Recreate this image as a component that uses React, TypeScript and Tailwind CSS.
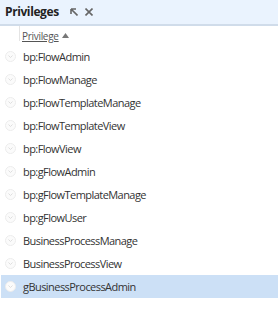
import React from "react";

const privileges = [
  "bp:FlowAdmin",
  "bp:FlowManage",
  "bp:FlowTemplateManage",
  "bp:FlowTemplateView",
  "bp:FlowView",
  "bp:gFlowAdmin",
  "bp:gFlowTemplateManage",
  "bp:gFlowUser",
  "BusinessProcessManage",
  "BusinessProcessView",
  "gBusinessProcessAdmin",
];

const ExpandIcon = () => (
  <svg width="11" height="11" viewBox="0 0 11 11" className="shrink-0">
    <circle cx="5.5" cy="5.5" r="5" fill="#fbfbfb" stroke="#ececec" />
    <path d="M3.5 4.5 5.5 6.5 7.5 4.5" fill="none" stroke="#dedede" strokeWidth="1" />
  </svg>
);

const Row = ({ name, selected }: { name: string; selected?: boolean }) => (
  <div
    className={`h-[23px] ml-[1px] flex items-center gap-[7px] pl-[4px] ${
      selected ? "bg-[#cce0f6]" : "bg-white"
    }`}
  >
    <ExpandIcon />
    <span className="text-[11px] tracking-[-0.55px] text-[#333] leading-none">{name}</span>
  </div>
);

const App: React.FC = () => {
  return (
    <div
      className="w-[278px] h-[311px] bg-white overflow-hidden"
      style={{ fontFamily: '"Open Sans", "Noto Sans", sans-serif' }}
    >
      <div className="h-[26px] bg-[#eaf3fe] border-b-2 border-[#d0dcea] flex items-center pl-[5px]">
        <span className="text-[12px] tracking-[-0.4px] font-bold text-[#222] leading-none">
          Privileges
        </span>
        <div className="flex items-center gap-[7px] ml-[11px] text-[#666]">
          <svg width="8" height="8" viewBox="0 0 8 8">
            <path d="M1 1h5M1 1v5M1 1l6.5 6.5" fill="none" stroke="currentColor" strokeWidth="1.6" />
          </svg>
          <svg width="8" height="8" viewBox="0 0 8 8">
            <path d="M0.5 0.5l7 7M7.5 0.5l-7 7" fill="none" stroke="currentColor" strokeWidth="1.6" />
          </svg>
        </div>
      </div>
      <div className="h-[19px] flex">
        <div className="w-[20px] border-r border-[#e4e4e4] h-[15px]" />
        <div className="flex items-center gap-[3px] pl-[2px]">
          <span className="text-[10px] tracking-[-0.3px] text-[#555] underline leading-none">
            Privilege
          </span>
          <svg width="7" height="5" viewBox="0 0 7 5">
            <path d="M0 5 3.5 0 7 5z" fill="#777" />
          </svg>
        </div>
      </div>
      <div className="flex flex-col">
        {privileges.map((p, i) => (
          <Row key={p} name={p} selected={i === privileges.length - 1} />
        ))}
      </div>
    </div>
  );
};

export default App;
